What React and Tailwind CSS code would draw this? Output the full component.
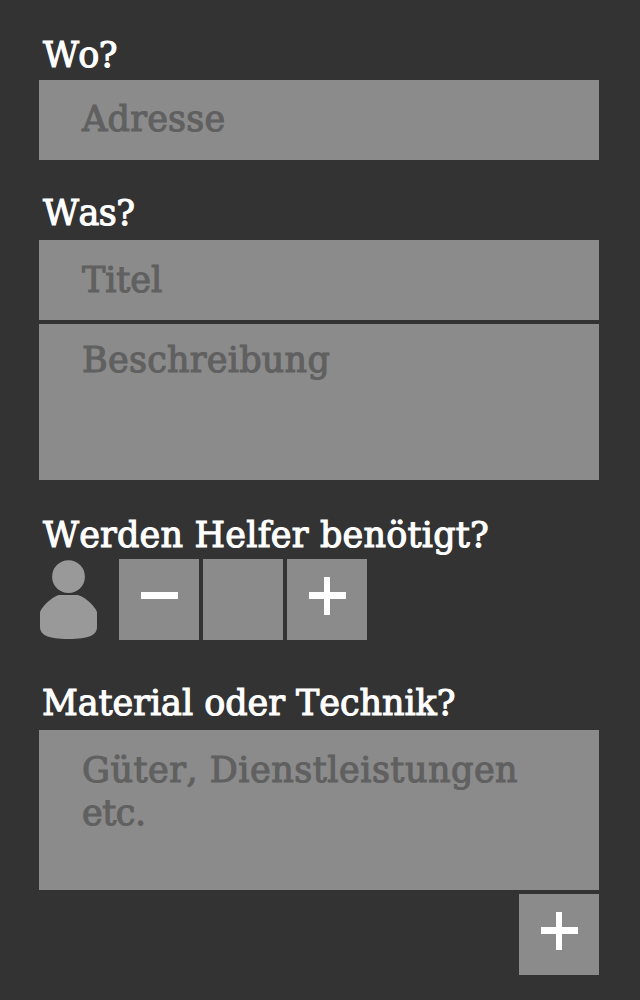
const FONT = "font-['DejaVu_Serif',serif] [font-kerning:none] [-webkit-text-stroke:1.1px_currentColor]";

function Label({ children, className }) {
  return (
    <h2 className={`flex h-10 items-start whitespace-nowrap text-[35px] leading-10 text-white ${className}`}>
      <span>{children}</span>
    </h2>
  );
}

function Field({ children, className }) {
  return (
    <div className={`w-full bg-[#8b8b8b] pl-[43px] text-[35px] leading-10 text-[#606060] ${className}`}>
      {children}
    </div>
  );
}

function Plus() {
  return (
    <svg width="37" height="38" viewBox="0 0 37 38" fill="#fff" shapeRendering="crispEdges">
      <path d="M0 15h37v7H0z" />
      <path d="M15 0h6v38h-6z" />
    </svg>
  );
}

function Tile({ children }) {
  return <div className="h-[81px] w-20 bg-[#8b8b8b] pl-[22px] pt-[18px]">{children}</div>;
}

export default function App() {
  return (
    <main className={`h-[1000px] w-[640px] overflow-hidden bg-[#333333] pl-[39px] pr-[41px] pt-[35px] ${FONT}`}>
      <Label className="mb-[5px] ml-1 tracking-[-0.6px]">Wo?</Label>
      <Field className="h-20 pt-[19px] tracking-[0.25px]">Adresse</Field>

      <Label className="mb-[7px] ml-1 mt-[33px] tracking-[-0.5px]">Was?</Label>
      <Field className="h-20 pt-5 tracking-[-0.1px]">Titel</Field>
      <Field className="mt-1 h-[156px] pt-4 tracking-[0.25px]">Beschreibung</Field>

      <Label className="mb-1 ml-1 mt-[35px] tracking-[0.2px]">Werden Helfer benötigt?</Label>
      <div className="flex gap-1">
        <svg className="mr-[17px] mt-px" width="59" height="80" viewBox="0 0 59 80" fill="#999999">
          <circle cx="29.5" cy="16.7" r="16.4" />
          <path d="M20 35H38Q41 35 46 38.500Q55 45 58 52V67C58 75 50 79 29.500 79C9 79 1 75 1 67V52Q4 45 13 38.500Q18 35 20 35Z" />
        </svg>
        <Tile>
          <svg width="37" height="38" viewBox="0 0 37 38" fill="#fff" shapeRendering="crispEdges">
            <path d="M0 15h37v7H0z" />
          </svg>
        </Tile>
        <Tile />
        <Tile><Plus /></Tile>
      </div>

      <Label className="mb-[7px] ml-[3px] mt-[43px] tracking-[-0.05px]">Material oder Technik?</Label>
      <Field className="h-40 pt-[19px]">
        <p className="leading-[43px] tracking-[0.5px]">
          Güter, Dienstleistungen<br />
          <span className="tracking-[-0.5px]">etc.</span>
        </p>
      </Field>
      <div className="mt-1 flex justify-end">
        <Tile><Plus /></Tile>
      </div>
    </main>
  );
}
